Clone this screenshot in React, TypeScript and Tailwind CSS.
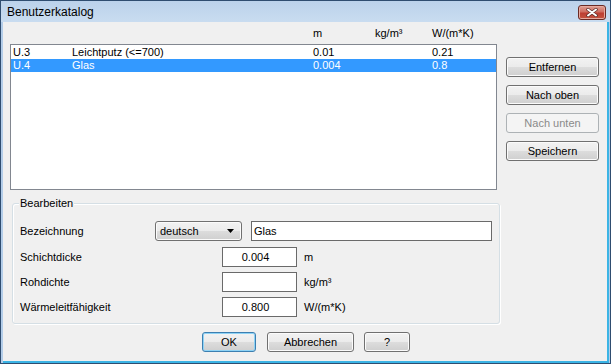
import React from 'react';

const btn =
  'flex items-center justify-center h-[20px] rounded-[3px] border border-[#707070] bg-[linear-gradient(to_bottom,#f2f2f2_0%,#ebebeb_50%,#dddddd_50%,#cfcfcf_100%)] shadow-[inset_0_0_0_1px_#fbfbfb]';

function CloseButton() {
  return (
    <div className="mt-[4px] mr-[4px] w-[28px] h-[15px] rounded-[3px] border border-[#6b2a24] bg-[linear-gradient(to_bottom,#e0a095_0%,#cf6d60_45%,#bd3e32_55%,#c5533f_100%)] shadow-[inset_0_0_0_1px_#e6aa9f] flex items-center justify-center">
      <svg width="12" height="9" viewBox="0 0 12 9">
        <path d="M2 1.5 L10 7.5 M10 1.5 L2 7.5" stroke="#5a2a26" strokeWidth="3.4" strokeLinecap="round" />
        <path d="M2 1.5 L10 7.5 M10 1.5 L2 7.5" stroke="#ffffff" strokeWidth="2" strokeLinecap="round" />
      </svg>
    </div>
  );
}

function Field({ value }: { value: string }) {
  return (
    <div className="w-[75px] h-[20px] border border-[#6a6a6a] bg-white flex items-center justify-center pr-[8px]">
      {value}
    </div>
  );
}

export default function App() {
  const rows = [
    { id: 'U.3', name: 'Leichtputz (<=700)', d: '0.01', l: '0.21', sel: false },
    { id: 'U.4', name: 'Glas', d: '0.004', l: '0.8', sel: true },
  ];

  return (
    <div className="w-[611px] h-[364px] border border-[#2f4d70] bg-[#b3cde9] flex flex-col font-['Liberation_Sans',Arial,sans-serif] text-[11px] leading-[13px] text-black">
      {/* title bar */}
      <div className="h-[21px] flex items-start justify-between bg-gradient-to-b from-[#bbd2eb] to-[#c9dcf0]">
        <span className="pl-[6px] pt-[4px] text-[12px] leading-[14px]">Benutzerkatalog</span>
        <CloseButton />
      </div>

      {/* client area */}
      <div className="ml-[2px] mr-[1px] h-[341px] border-r-2 border-b-2 border-[#3bb4e5] bg-[#f0f0f0] flex flex-col">
        <div className="flex pl-[7px]">
          <div className="w-[487px] flex flex-col">
            <div className="h-[22px] pt-[5px] flex">
              <span className="w-[303px]" />
              <span className="w-[62px]">m</span>
              <span className="w-[57px]">kg/m³</span>
              <span>W/(m*K)</span>
            </div>
            <div className="h-[146px] border border-[#828790] bg-white pt-[1px]">
              {rows.map(r => (
                <div
                  key={r.id}
                  className={`h-[13px] flex pl-[2px] ${r.sel ? 'bg-[#3399ff] text-white' : ''}`}
                >
                  <span className="w-[59px]">{r.id}</span>
                  <span className="w-[241px]">{r.name}</span>
                  <span className="w-[119px]">{r.d}</span>
                  <span>{r.l}</span>
                </div>
              ))}
            </div>
          </div>

          <div className="ml-[9px] pt-[35px] w-[93px] flex flex-col gap-[8px]">
            <div className={btn}>Entfernen</div>
            <div className={btn}>Nach oben</div>
            <div className="flex items-center justify-center h-[20px] rounded-[3px] border border-[#adb2b5] bg-[#f4f4f4] text-[#8a8a8a]">
              Nach unten
            </div>
            <div className={btn}>Speichern</div>
          </div>
        </div>

        {/* Bearbeiten group */}
        <div className="ml-[9px] mt-[13px] w-[488px] border border-[#d5dfe5] rounded-[3px] shadow-[inset_1px_1px_0_#ffffff,1px_1px_0_#ffffff] flex flex-col pl-[7px] pb-[6px]">
          <div className="-mt-[7px] -ml-[1px] w-fit px-[1px] bg-[#f0f0f0]">Bearbeiten</div>

          <div className="mt-[11px] h-[20px] flex items-center">
            <span className="w-[135px]">Bezeichnung</span>
            <div className="w-[87px] h-[20px] rounded-[3px] border border-[#707070] bg-[linear-gradient(to_bottom,#f2f2f2_0%,#ebebeb_50%,#dddddd_50%,#cfcfcf_100%)] shadow-[inset_0_0_0_1px_#fbfbfb] flex items-center justify-between pl-[4px] pr-[7px]">
              <span>deutsch</span>
              <svg width="7" height="4" viewBox="0 0 7 4">
                <path d="M0 0 H7 L3.5 4 Z" fill="#000" />
              </svg>
            </div>
            <div className="ml-[9px] w-[241px] h-[20px] border border-[#6a6a6a] bg-white flex items-center pl-[2px]">
              Glas
            </div>
          </div>

          <div className="mt-[6px] h-[20px] flex items-center">
            <span className="w-[202px]">Schichtdicke</span>
            <Field value="0.004" />
            <span className="ml-[7px]">m</span>
          </div>
          <div className="mt-[5px] h-[20px] flex items-center">
            <span className="w-[202px]">Rohdichte</span>
            <Field value="" />
            <span className="ml-[7px]">kg/m³</span>
          </div>
          <div className="mt-[5px] h-[20px] flex items-center">
            <span className="w-[202px]">Wärmeleitfähigkeit</span>
            <Field value="0.800" />
            <span className="ml-[7px]">W/(m*K)</span>
          </div>
        </div>

        {/* dialog buttons */}
        <div className="mt-[8px] pl-[199px] flex">
          <div className="w-[54px] flex items-center justify-center h-[20px] rounded-[3px] border border-[#3c7fb1] bg-[linear-gradient(to_bottom,#f2f2f2_0%,#ebebeb_50%,#dddddd_50%,#cfcfcf_100%)] shadow-[inset_0_0_0_1px_#8fd3f5]">
            OK
          </div>
          <div className={`ml-[11px] w-[87px] ${btn}`}>Abbrechen</div>
          <div className={`ml-[10px] w-[46px] ${btn}`}>?</div>
        </div>
      </div>
    </div>
  );
}
